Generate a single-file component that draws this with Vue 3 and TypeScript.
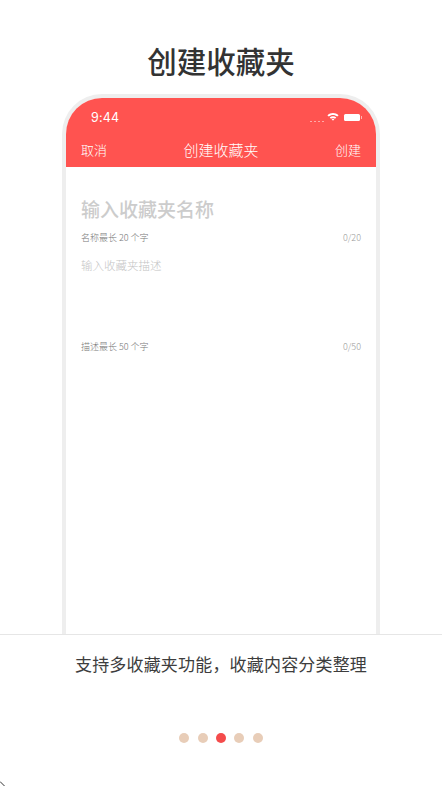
<script setup lang="ts">
const dots: number[] = [0, 1, 2, 3, 4]
const activeDot = 2
</script>

<template>
  <div class="page">
    <h1 class="headline">创建收藏夹</h1>
    <div class="phone">
      <header class="appbar">
        <div class="status">
          <span class="time">9:44</span>
          <div class="status-icons">
            <span class="signal"><i v-for="n in 4" :key="n"></i></span>
            <svg class="wifi" width="12" height="9" viewBox="0 0 12 9">
              <path d="M0.4 3.2C3.5 0.2 8.5 0.2 11.6 3.2L10.3 4.6C7.8 2.3 4.2 2.3 1.7 4.6Z" fill="#fff" />
              <path d="M2.7 5.4C4.6 3.7 7.4 3.7 9.3 5.4L8 6.7C6.8 5.6 5.2 5.6 4 6.7Z" fill="#fff" />
              <path d="M4.7 7.3C5.4 6.7 6.6 6.7 7.3 7.3L6 8.8Z" fill="#fff" />
            </svg>
            <span class="battery"></span>
          </div>
        </div>
        <nav class="nav">
          <span>取消</span>
          <span class="nav-title">创建收藏夹</span>
          <span>创建</span>
        </nav>
      </header>
      <section class="form">
        <div class="name-ph">输入收藏夹名称</div>
        <div class="hint name-hint"><span>名称最长 20 个字</span><span class="count">0/20</span></div>
        <div class="desc-ph">输入收藏夹描述</div>
        <div class="hint desc-hint"><span>描述最长 50 个字</span><span class="count">0/50</span></div>
      </section>
    </div>
    <footer class="footer">
      <p class="caption">支持多收藏夹功能，收藏内容分类整理</p>
      <div class="dots">
        <span v-for="d in dots" :key="d" class="dot" :class="{ active: d === activeDot }"></span>
      </div>
    </footer>
    <svg class="corner-mark" width="8" height="8" viewBox="0 0 8 8">
      <path d="M0 2.5L4.5 7" stroke="#333" stroke-width="1" fill="none" />
    </svg>
  </div>
</template>

<style scoped>
.page {
  position: relative;
  width: 442px;
  height: 787px;
  overflow: hidden;
  display: flex;
  flex-direction: column;
  align-items: center;
  background: #fff;
  font-family: "Noto Sans CJK SC", "Liberation Sans", sans-serif;
}
.headline {
  margin: 0;
  height: 94px;
  padding-top: 39px;
  box-sizing: border-box;
  font-size: 29.5px;
  line-height: 43px;
  font-weight: 500;
  color: #333;
}
.phone {
  width: 318px;
  flex: 1;
  min-height: 0;
  box-sizing: border-box;
  border: 4px solid #eeeeee;
  border-bottom: 0;
  border-radius: 40px 40px 0 0;
  overflow: hidden;
  background: #fff;
}
.appbar {
  height: 69px;
  background: #ff5350;
  color: #fff;
  display: flex;
  flex-direction: column;
}
.status {
  height: 37px;
  padding: 0 15px 0 25px;
  display: flex;
  align-items: center;
  justify-content: space-between;
}
.time {
  font-family: "Inter", "Liberation Sans", sans-serif;
  font-size: 12.5px;
  letter-spacing: 0.2px;
  font-weight: 400;
  margin-top: 1px;
}
.status-icons {
  display: flex;
  align-items: center;
  gap: 3px;
}
.signal {
  display: flex;
  gap: 2px;
  align-items: flex-end;
  height: 9px;
  margin-top: 1px;
}
.signal i {
  width: 2px;
  height: 1px;
  background: #ffa9a6;
}
.wifi {
  display: block;
  margin-top: -1px;
}
.battery {
  position: relative;
  display: block;
  width: 16px;
  height: 7px;
  margin-top: 1px;
  margin-left: 2px;
  margin-right: 1px;
  background: #fff;
  border-radius: 1.5px;
}
.battery::after {
  content: "";
  position: absolute;
  right: -2px;
  top: 2px;
  width: 1px;
  height: 3px;
  background: #ffb5b3;
}
.nav {
  flex: 1;
  padding: 0 15px;
  display: flex;
  align-items: center;
  justify-content: space-between;
  font-size: 13px;
  font-weight: 300;
  line-height: 18px;
  margin-top: -2px;
}
.nav-title {
  font-size: 15px;
  margin-top: -1px;
}
.form {
  padding: 30px 15px 0;
}
.name-ph {
  font-size: 19px;
  line-height: 24px;
  font-weight: 500;
  color: #cccccc;
}
.hint {
  display: flex;
  justify-content: space-between;
  font-size: 9px;
  line-height: 12px;
  color: #777;
  font-weight: 300;
}
.count {
  color: #999;
}
.name-hint {
  margin-top: 11px;
}
.desc-ph {
  margin-top: 13px;
  font-size: 11.5px;
  line-height: 16px;
  color: #c4c4c4;
  font-weight: 300;
}
.desc-hint {
  margin-top: 68px;
}
.footer {
  width: 100%;
  height: 153px;
  flex: none;
  box-sizing: border-box;
  border-top: 1px solid #e6e6e6;
  background: #fff;
  display: flex;
  flex-direction: column;
  align-items: center;
}
.caption {
  margin: 16px 0 0;
  font-size: 17px;
  line-height: 26px;
  letter-spacing: 0.18px;
  font-weight: 400;
  color: #3d3d3d;
}
.dots {
  margin-top: 56px;
  display: flex;
  gap: 8.3px;
}
.dot {
  width: 10px;
  height: 10px;
  border-radius: 50%;
  background: #e8cdb8;
}
.dot.active {
  background: #f44b4b;
}
.corner-mark {
  position: absolute;
  left: 0;
  bottom: 0;
}
</style>
